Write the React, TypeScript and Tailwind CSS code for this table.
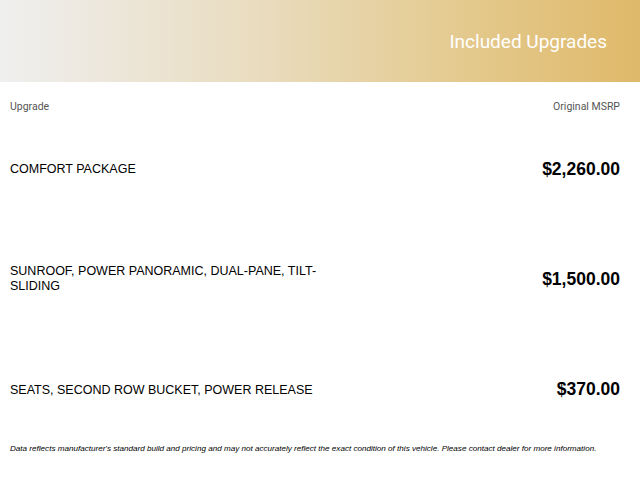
import React from "react";

const rows = [
  { name: "COMFORT PACKAGE", price: "$2,260.00" },
  { name: "SUNROOF, POWER PANORAMIC, DUAL-PANE, TILT-SLIDING", price: "$1,500.00" },
  { name: "SEATS, SECOND ROW BUCKET, POWER RELEASE", price: "$370.00" },
];

export default function App() {
  return (
    <div className="w-[640px] h-[480px] bg-white overflow-hidden">
      <div className="h-[82px] bg-[linear-gradient(to_right,#efefef_0%,#e9dcbf_40%,#e4cb91_70%,#dfb96a_100%)] flex items-center justify-end pr-[33px]">
        <h1 className="font-['Roboto',sans-serif] text-[19px] text-white font-normal leading-none mt-[1px]">
          Included Upgrades
        </h1>
      </div>
      <div className="flex justify-between pt-[18px] pl-[10px] pr-[20px] font-['Roboto',sans-serif] text-[10.5px] leading-[14px] text-[#555]">
        <span>Upgrade</span>
        <span>Original MSRP</span>
      </div>
      {rows.map((r, i) => (
        <div
          key={r.name}
          className="h-[110px] flex items-center justify-between pl-[10px] pr-[20px]"
        >
          <div className={`w-[315px] font-['Liberation_Sans',Arial,sans-serif] text-[12.5px] leading-[15px] text-black ${i === 2 ? "mt-[3px]" : ""}`}>
            {r.name}
          </div>
          <div className="font-['Liberation_Sans',Arial,sans-serif] font-bold text-[17.5px] leading-[20px] text-black">
            {r.price}
          </div>
        </div>
      ))}
      <p className="pl-[10px] font-['Liberation_Sans',Arial,sans-serif] italic text-[8.1px] leading-[10px] text-black">
        Data reflects manufacturer's standard build and pricing and may not accurately reflect the exact condition of this vehicle. Please contact dealer for more information.
      </p>
    </div>
  );
}
